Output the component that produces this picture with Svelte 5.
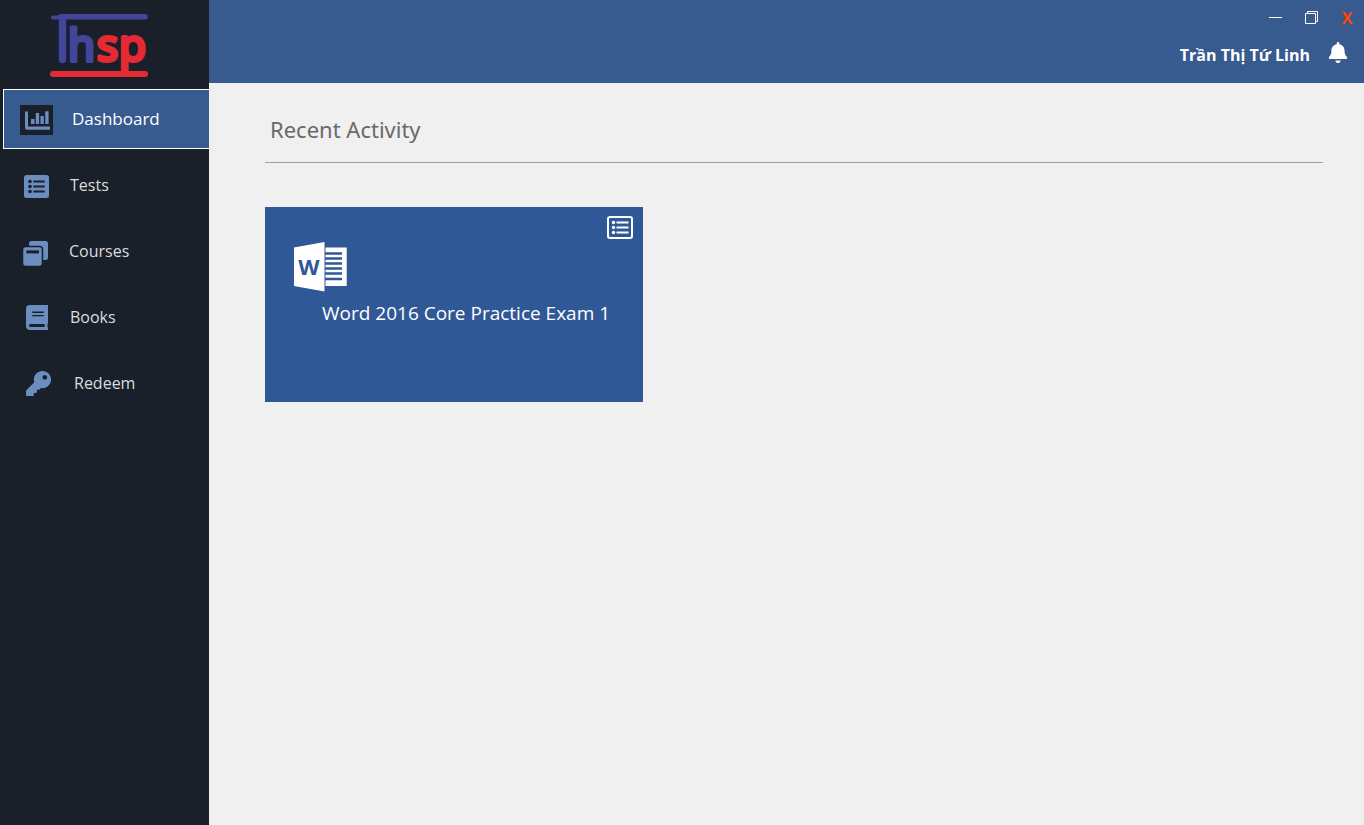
<script>
  let active = $state('Dashboard');

  // Each glyph sits in a box of its own width; labels follow after a shared gap.
  const items = [
    { name: 'Dashboard', width: 34 },
    { name: 'Tests', width: 32 },
    { name: 'Courses', width: 31 },
    { name: 'Books', width: 32 },
    { name: 'Redeem', width: 36 }
  ];
</script>

<div class="app">
  <aside class="sidebar">
    <svg class="logo" viewBox="50 10 100 70" width="100" height="70" role="img" aria-label="Thsp">
      <g stroke-linejoin="round" stroke-linecap="round">
        <path d="M61 16.8H145" stroke="#43459b" stroke-width="5.6" />
        <path d="M53 17.5H62" stroke="#43459b" stroke-width="4" />
        <path d="M62.5 18V59.5" stroke="#43459b" stroke-width="7.4" />
        <path d="M53 74H145" stroke="#e62a34" stroke-width="6" />
        <text x="68" y="61" font-size="44" fill="#43459b" stroke="#43459b" stroke-width="4">h</text>
        <text x="97" y="61" font-size="44" fill="#e62a34" stroke="#e62a34" stroke-width="4">s</text>
        <text x="119" y="61" font-size="44" fill="#e62a34" stroke="#e62a34" stroke-width="4">p</text>
      </g>
    </svg>
    <nav>
      {#each items as item}
        <button class="item" class:active={active === item.name} onclick={() => (active = item.name)}>
          <svg width={item.width} height="32" viewBox="0 0 {item.width} 32" fill="#6b8dbf" aria-hidden="true">
            {#if item.name === 'Dashboard'}
              <path d="M0 2H33V32H0z" fill="#19202a" />
              <path d="M5 8.5h3v15h22v3.3H7a2 2 0 0 1-2-2z" />
              <path d="M11 16h3.5v5H11zM15.8 10h3.3v11h-3.3zM20.5 13h3.3v8h-3.3zM25.2 8.2h3.4V21h-3.4z" />
            {:else if item.name === 'Tests'}
              <rect x="4" y="6" width="25" height="23" rx="2.5" />
              <path d="M13.3 12.5H24.7M13.3 17.5H24.7M13.3 22.5H24.7" stroke="#19202a" stroke-width="2.2" />
              <g fill="#19202a">
                <circle cx="10" cy="12.5" r="1.8" /><circle cx="10" cy="17.5" r="1.8" /><circle cx="10" cy="22.5" r="1.8" />
              </g>
            {:else if item.name === 'Courses'}
              <rect x="9" y="6" width="19" height="19" rx="2.5" />
              <rect x="2.5" y="11.5" width="20" height="20" rx="3" stroke="#19202a" stroke-width="1.5" />
              <path d="M6.3 15.4H19v3H6.3z" fill="#19202a" />
            {:else if item.name === 'Books'}
              <path d="M10 4H28V22.5L27.5 23v3l.5.5V29H10a4 4 0 0 1-4-4V8a4 4 0 0 1 4-4z" />
              <path d="M12.3 11.2H23.7M12.3 14.6H23.7" stroke="#19202a" stroke-width="1.4" />
              <rect x="9" y="23" width="16" height="3" rx="1.5" fill="#19202a" />
            {:else}
              <path transform="translate(6 4) scale(.049)" d="M512 176.001C512 273.203 433.202 352 336 352c-11.22 0-22.19-1.062-32.827-3.069l-24.012 27.014A23.999 23.999 0 0 1 261.223 384H224v40c0 13.255-10.745 24-24 24h-40v40c0 13.255-10.745 24-24 24H24c-13.255 0-24-10.745-24-24v-78.059c0-6.365 2.529-12.47 7.029-16.971l161.802-161.802C163.108 213.814 160 195.271 160 176 160 78.798 238.797.001 335.999 0 433.488-.001 512 78.511 512 176.001zM336 128c0 26.51 21.49 48 48 48s48-21.49 48-48-21.49-48-48-48-48 21.49-48 48z" />
            {/if}
          </svg>
          <span>{item.name}</span>
        </button>
      {/each}
    </nav>
  </aside>

  <div class="page">
    <header>
      <div class="window">
        <button aria-label="Minimize">
          <svg width="14" height="14" viewBox="0 0 14 14"><path d="M0 6.5H13" stroke="#fff" /></svg>
        </button>
        <button aria-label="Restore">
          <svg width="14" height="14" viewBox="0 0 14 14" fill="none" stroke="#fff"><path d="M.5 2.5h10v10H.5zM2.5 2.5v-2h10v10h-2" /></svg>
        </button>
        <button class="close">X</button>
      </div>
      <div class="user">
        <span>Trần Thị Tứ Linh</span>
        <button aria-label="Notifications">
          <svg width="20" height="21" viewBox="0 0 448 512" fill="#fff"><path d="M224 512c35.32 0 63.97-28.65 63.97-64H160.03c0 35.35 28.65 64 63.97 64zm215.39-149.71c-19.32-20.76-55.47-51.99-55.47-154.29 0-77.7-54.48-139.9-127.94-155.16V32c0-17.67-14.32-32-31.98-32s-31.98 14.33-31.98 32v20.84C118.56 68.1 64.08 130.3 64.08 208c0 102.3-36.15 133.53-55.47 154.29-6 6.45-8.66 14.16-8.61 21.71.11 16.4 12.98 32 32.1 32h383.8c19.12 0 32-15.6 32.1-32 .05-7.55-2.61-15.27-8.61-21.71z" /></svg>
        </button>
      </div>
    </header>

    <main>
      <h1>Recent Activity</h1>
      <div class="cards">
        <button class="card">
          <svg class="kind" width="26" height="23" viewBox="0 0 26 23" fill="none" stroke="#fff" aria-hidden="true">
            <rect x="1" y="1" width="24" height="21" rx="2" stroke-width="2" />
            <path d="M9.5 6.5H21.5M9.5 11.5H21.5M9.5 16.5H21.5" stroke-width="2" />
            <g fill="#fff" stroke="none"><circle cx="6.5" cy="6.5" r="1.7" /><circle cx="6.5" cy="11.5" r="1.7" /><circle cx="6.5" cy="16.5" r="1.7" /></g>
          </svg>
          <svg class="word" width="53" height="51" viewBox="0 0 53 51" role="img" aria-label="Word">
            <path d="M0 6.5 30.5 1V50.5L0 45z" fill="#fff" />
            <path d="M31.5 6.5H52.7V45H31.5z" fill="#fff" />
            <path d="M31 12.5H48M31 17.5H48M31 22.5H48M31 27.5H48M31 32.5H48M31 38H48" stroke="#305896" stroke-width="2.6" />
            <text x="15" y="34" font-size="22" font-weight="700" text-anchor="middle" fill="#305896">W</text>
          </svg>
          <span class="title">Word 2016 Core Practice Exam 1</span>
        </button>
      </div>
    </main>
  </div>
</div>

<style>
  :global(body) {
    margin: 0;
    background: #f0f0f0;
  }
  .app {
    display: flex;
    min-height: 100vh;
    font-family: 'Segoe UI', 'Open Sans', 'Noto Sans', sans-serif;
  }
  button {
    font: inherit;
    color: inherit;
    background: none;
    border: 0;
    padding: 0;
    cursor: pointer;
  }
  svg {
    display: block;
    flex: none;
  }
  .sidebar {
    flex: none;
    box-sizing: border-box;
    width: 209px;
    padding: 10px 0 0 3px;
    background: #19202a;
  }
  .logo {
    margin: 0 auto 9px 47px;
  }
  nav {
    display: flex;
    flex-direction: column;
    gap: 6px;
  }
  .item {
    box-sizing: border-box;
    display: flex;
    align-items: center;
    gap: 18px;
    height: 60px;
    padding-left: 16px;
    border: 1px solid transparent;
    border-right: 0;
    font-size: 16px;
    line-height: 24px;
    color: #dcdcdc;
  }
  .item.active {
    background: #375a8f;
    border-color: #fff;
    color: #fff;
    font-size: 17px;
  }
  .page {
    flex: 1;
    min-width: 0;
  }
  header {
    box-sizing: border-box;
    height: 83px;
    background: #375a8f;
    color: #fff;
  }
  .window {
    display: flex;
    justify-content: flex-end;
  }
  .window button {
    display: flex;
    align-items: center;
    justify-content: center;
    width: 36px;
    height: 36px;
  }
  .window .close {
    width: 34px;
    color: #ff4500;
    font-size: 16px;
    font-weight: 700;
  }
  .user {
    display: flex;
    align-items: center;
    justify-content: flex-end;
    gap: 18px;
    height: 38px;
    padding-right: 16px;
    font-size: 16px;
    font-weight: 700;
  }
  .user button {
    padding-bottom: 6px;
  }
  main {
    padding: 28px 41px 56px 56px;
  }
  h1 {
    margin: 0 0 44px;
    padding: 2px 5px 17px;
    border-bottom: 1px solid #a0a0a0;
    font-family: Tahoma, 'Noto Sans', sans-serif;
    font-size: 22px;
    font-weight: 400;
    line-height: 32px;
    color: #696969;
  }
  .cards {
    display: grid;
    grid-template-columns: repeat(auto-fill, 378px);
    gap: 32px;
  }
  .card {
    box-sizing: border-box;
    display: flex;
    flex-direction: column;
    min-height: 195px;
    padding: 9px 10px 16px 29px;
    background: #305896;
    color: #fff;
    text-align: left;
  }
  .kind {
    align-self: flex-end;
  }
  .word {
    margin-top: 2px;
  }
  .title {
    margin: 8px 0 0 28px;
    font-size: 19px;
    line-height: 26px;
    white-space: nowrap;
  }
</style>
